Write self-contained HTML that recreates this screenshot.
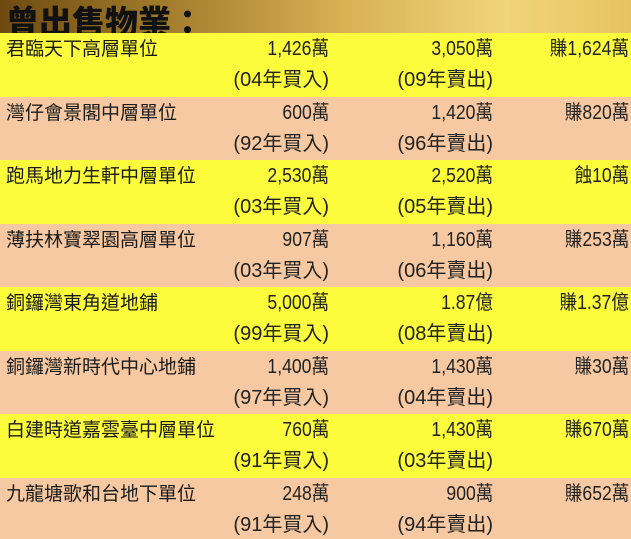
<!DOCTYPE html>
<html><head><meta charset="utf-8"><style>
body{margin:0;width:631px;height:538px;overflow:hidden;font-family:"Liberation Sans","Noto Sans CJK TC",sans-serif;color:#222}
.h{position:absolute;left:0;top:0;width:631px;height:33px;background:linear-gradient(90deg,#6e4a12 0%,#a07a2a 25%,#d9b255 55%,#f0d47a 80%,#e8c460 100%)}
.h span{position:absolute;left:6px;top:-4px;font-size:33px;font-weight:900;color:#111;letter-spacing:0px;font-family:"Noto Sans CJK TC",sans-serif}
.r{position:absolute;left:0;width:631px;height:63.5px}
.y{background:#fcfc3c}.p{background:#f7c9a2}
.t{position:absolute;font-size:20px;line-height:22px;white-space:nowrap;transform:scaleX(.88);transform-origin:right}
.n{left:6px;transform:none;font-size:19px;font-family:"Noto Sans CJK TC",sans-serif;top:4px;line-height:22px;color:#1a1a1a}
.a{right:302px;top:5px}.b{right:138px;top:5px}.c{right:2px;top:5px}
.a2{right:302px;top:36px;transform:none}.b2{right:138px;top:36px;transform:none}
</style></head><body>
<div class="h"><span>曾出售物業：</span></div>
<div class="r y" style="top:33px"><div class="t n">君臨天下高層單位</div><div class="t a">1,426萬</div><div class="t b">3,050萬</div><div class="t c">賺1,624萬</div><div class="t a2">(04年買入)</div><div class="t b2">(09年賣出)</div></div>
<div class="r p" style="top:96.5px"><div class="t n">灣仔會景閣中層單位</div><div class="t a">600萬</div><div class="t b">1,420萬</div><div class="t c">賺820萬</div><div class="t a2">(92年買入)</div><div class="t b2">(96年賣出)</div></div>
<div class="r y" style="top:160px"><div class="t n">跑馬地力生軒中層單位</div><div class="t a">2,530萬</div><div class="t b">2,520萬</div><div class="t c">蝕10萬</div><div class="t a2">(03年買入)</div><div class="t b2">(05年賣出)</div></div>
<div class="r p" style="top:223.5px"><div class="t n">薄扶林寶翠園高層單位</div><div class="t a">907萬</div><div class="t b">1,160萬</div><div class="t c">賺253萬</div><div class="t a2">(03年買入)</div><div class="t b2">(06年賣出)</div></div>
<div class="r y" style="top:287px"><div class="t n">銅鑼灣東角道地鋪</div><div class="t a">5,000萬</div><div class="t b">1.87億</div><div class="t c">賺1.37億</div><div class="t a2">(99年買入)</div><div class="t b2">(08年賣出)</div></div>
<div class="r p" style="top:350.5px"><div class="t n">銅鑼灣新時代中心地鋪</div><div class="t a">1,400萬</div><div class="t b">1,430萬</div><div class="t c">賺30萬</div><div class="t a2">(97年買入)</div><div class="t b2">(04年賣出)</div></div>
<div class="r y" style="top:414px"><div class="t n">白建時道嘉雲臺中層單位</div><div class="t a">760萬</div><div class="t b">1,430萬</div><div class="t c">賺670萬</div><div class="t a2">(91年買入)</div><div class="t b2">(03年賣出)</div></div>
<div class="r p" style="top:477.5px;height:61px"><div class="t n">九龍塘歌和台地下單位</div><div class="t a">248萬</div><div class="t b">900萬</div><div class="t c">賺652萬</div><div class="t a2">(91年買入)</div><div class="t b2">(94年賣出)</div></div>
</body></html>
